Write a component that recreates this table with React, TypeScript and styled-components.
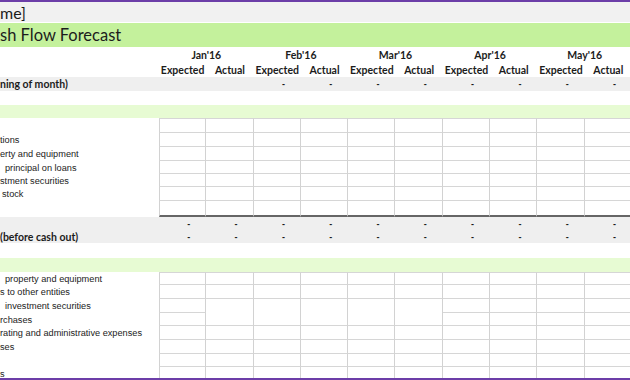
import React from "react";
import styled, { createGlobalStyle } from "styled-components";

const COLS = "159px repeat(10, 47.3px)";
const HEAD_FONT = "Lato, 'Open Sans', sans-serif";
const CELL_FONT = "'Liberation Sans', Arial, sans-serif";

const GlobalStyle = createGlobalStyle`
	body {
		margin: 0;
		background: #ffffff;
	}
`;

const Frame = styled.div`
	width: 630px;
	height: 380px;
	box-sizing: border-box;
	border-top: 2px solid #6c3ea8;
	border-bottom: 2px solid #6c3ea8;
	overflow: hidden;
	background: #ffffff;
	color: #1c1c1c;
	white-space: nowrap;
`;

const NameBand = styled.div`
	height: 20px;
	line-height: 21px;
	background: #f1f1f1;
	font-family: ${HEAD_FONT};
	font-size: 16px;
`;

const TitleBand = styled.div`
	margin-top: 1px;
	height: 24px;
	line-height: 25px;
	background: #c4f19c;
	font-family: ${HEAD_FONT};
	font-size: 16.5px;
`;

const Row = styled.div<{ $h: number; $bg?: string }>`
	display: grid;
	grid-template-columns: ${COLS};
	height: ${p => p.$h}px;
	background: ${p => p.$bg ?? "transparent"};
	align-items: center;
`;

const BoldLabel = styled.div`
	grid-column: 1;
	font-family: ${HEAD_FONT};
	font-weight: 700;
	font-size: 10.5px;
`;

const MonthHead = styled.div`
	grid-column: span 2;
	text-align: center;
	font-family: ${HEAD_FONT};
	font-weight: 700;
	font-size: 10.5px;
`;

const SubHead = styled.div`
	text-align: center;
	font-family: ${HEAD_FONT};
	font-weight: 700;
	font-size: 10.5px;
`;

const Dash = styled.div`
	text-align: right;
	padding-right: 16px;
	font-family: ${CELL_FONT};
	font-size: 9px;
	font-weight: 700;
`;

const GridRow = styled(Row)`
	align-items: stretch;
`;

const LabelBox = styled.div<{ $indent?: number }>`
	display: flex;
	align-items: center;
	padding-left: ${p => p.$indent ?? 0}px;
	overflow: hidden;
	font-family: ${CELL_FONT};
	font-size: 9.2px;
	color: #222222;
`;

const Cell = styled.div<{ $first?: boolean; $top?: boolean; $thick?: boolean; $open?: boolean }>`
	border-right: 1px solid #d2d2d2;
	border-bottom: ${p =>
		p.$thick ? "2px solid #666666" : p.$open ? "none" : "1px solid #d6d6d6"};
	border-left: ${p => (p.$first ? "1px solid #d2d2d2" : "none")};
	border-top: ${p => (p.$top ? "1px solid #d6d6d6" : "none")};
`;

const months = ["Jan'16", "Feb'16", "Mar'16", "Apr'16", "May'16"];

type Line = { text: string; h: number; indent?: number; open?: number[] };

const receipts: Line[] = [
	{ text: "", h: 15 },
	{ text: "tions", h: 14 },
	{ text: "erty and equipment", h: 14 },
	{ text: "principal on loans", h: 13, indent: 5 },
	{ text: "stment securities", h: 13 },
	{ text: "stock", h: 14, indent: 2 },
	{ text: "", h: 16 },
];

const payments: Line[] = [
	{ text: "property and equipment", h: 13, indent: 5 },
	{ text: "s to other entities", h: 14 },
	{ text: "investment securities", h: 14, indent: 5, open: [1, 2, 3, 4, 5] },
	{ text: "rchases", h: 13 },
	{ text: "rating and administrative expenses", h: 14 },
	{ text: "ses", h: 14 },
	{ text: "", h: 13 },
	{ text: "s", h: 14 },
];

const cols = Array.from({ length: 10 }, (_, i) => i);

const DataBlock: React.FC<{ lines: Line[]; thickEnd?: boolean }> = ({ lines, thickEnd }) => (
	<>
		{lines.map((line, r) => (
			<GridRow key={r} $h={line.h}>
				<LabelBox $indent={line.indent}>{line.text}</LabelBox>
				{cols.map(c => (
					<Cell
						key={c}
						$first={c === 0}
						$top={r === 0}
						$thick={thickEnd && r === lines.length - 1}
						$open={line.open?.includes(c)}
					/>
				))}
			</GridRow>
		))}
	</>
);

const DashRow: React.FC<{ h: number; label?: string; skip?: number; bg?: string }> = ({
	h,
	label,
	skip = 0,
	bg,
}) => (
	<Row $h={h} $bg={bg}>
		<BoldLabel>{label}</BoldLabel>
		{cols.map(c => (
			<Dash key={c}>{c >= skip ? "-" : ""}</Dash>
		))}
	</Row>
);

export default function App() {
	return (
		<>
			<GlobalStyle />
			<Frame>
				<NameBand>me]</NameBand>
				<TitleBand>sh Flow Forecast</TitleBand>

				<Row $h={16}>
					<div />
					{months.map(m => (
						<MonthHead key={m}>{m}</MonthHead>
					))}
				</Row>
				<Row $h={14}>
					<div />
					{months.map(m => (
						<React.Fragment key={m}>
							<SubHead>Expected</SubHead>
							<SubHead>Actual</SubHead>
						</React.Fragment>
					))}
				</Row>
				<DashRow h={14} label="ning of month)" skip={2} bg="#efefef" />
				<Row $h={14} />
				<Row $h={13} $bg="#e7fbd3" />

				<DataBlock lines={receipts} thickEnd />

				<DashRow h={13} bg="#efefef" />
				<DashRow h={13} label="(before cash out)" bg="#efefef" />
				<Row $h={15} />
				<Row $h={14} $bg="#e7fbd3" />

				<DataBlock lines={payments} />
			</Frame>
		</>
	);
}
